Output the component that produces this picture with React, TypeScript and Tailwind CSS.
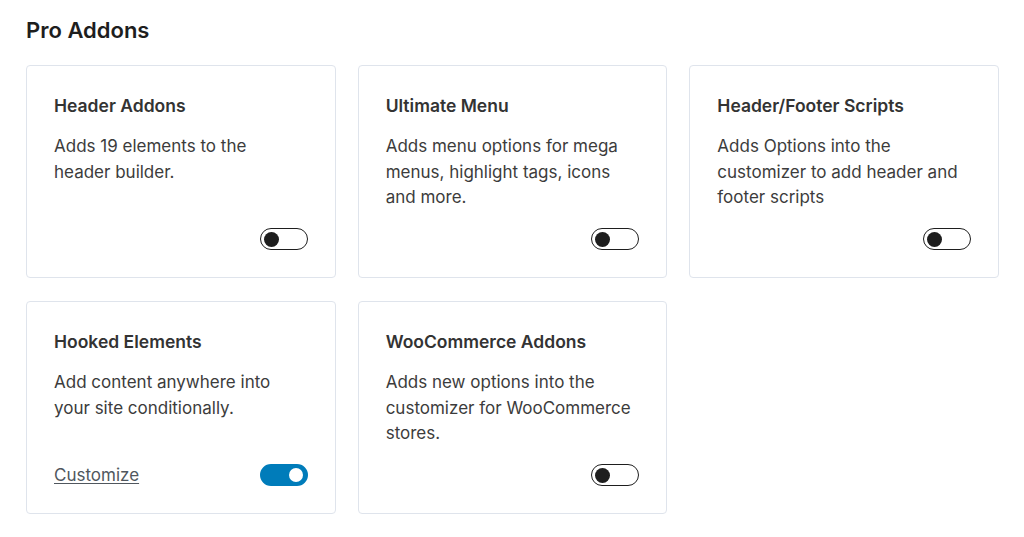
import { useState } from 'react'

type Addon = {
  key: string
  title: string
  description: string
  enabled: boolean
  customize?: boolean
}

const ADDONS: Addon[] = [
  { key: 'header', title: 'Header Addons', description: 'Adds 19 elements to the header builder.', enabled: false },
  { key: 'menu', title: 'Ultimate Menu', description: 'Adds menu options for mega menus, highlight tags, icons and more.', enabled: false },
  { key: 'scripts', title: 'Header/Footer Scripts', description: 'Adds Options into the customizer to add header and footer scripts', enabled: false },
  { key: 'hooks', title: 'Hooked Elements', description: 'Add content anywhere into your site conditionally.', enabled: true, customize: true },
  { key: 'woo', title: 'WooCommerce Addons', description: 'Adds new options into the customizer for WooCommerce stores.', enabled: false },
]

export default function App() {
  return (
    <div
      className="min-h-screen bg-white px-[26px] pt-[16px] text-[#1e1e1e]"
      style={{ fontFamily: 'Inter, "Noto Sans", sans-serif' }}
    >
      <h2 className="text-[22px] font-semibold leading-[28px] text-[#1e1e1e]">Pro Addons</h2>

      <div className="mt-[21px] grid w-[973px] grid-cols-3 gap-x-[22px] gap-y-[23px]">
        {ADDONS.map((addon) => (
          <AddonCard key={addon.key} addon={addon} />
        ))}
      </div>
    </div>
  )
}

function AddonCard({ addon }: { addon: Addon }) {
  const [enabled, setEnabled] = useState(addon.enabled)

  return (
    <div className="flex h-[213px] flex-col rounded-[4px] border border-[#dfe4ec] bg-white pt-[28px] pr-[27px] pb-[27px] pl-[27px]">
      <h3 className="text-[17.5px] font-semibold leading-[24px] text-[#333]">{addon.title}</h3>
      {/* keep the text a bit narrower than the card so the lines break as in the design */}
      <p className="mt-[16px] pr-[4px] text-[17px] leading-[25.5px] text-[#3c3c3c]">{addon.description}</p>

      <div className="mt-auto flex items-center justify-between">
        {addon.customize ? (
          <a href="#" className="text-[17px] leading-[22px] text-[#50575e] underline underline-offset-2">
            Customize
          </a>
        ) : (
          <span />
        )}
        <button
          type="button"
          onClick={() => setEnabled((v) => !v)}
          className={
            enabled
              ? 'relative flex h-[22px] w-[48px] items-center rounded-full border-2 border-[#007cba] bg-[#007cba]'
              : 'relative flex h-[22px] w-[48px] items-center rounded-full border-[1.5px] border-[#1e1e1e] bg-white'
          }
        >
          <span
            className={
              enabled
                ? 'absolute right-[3px] h-[14px] w-[14px] rounded-full bg-white'
                : 'absolute left-[3px] h-[15px] w-[15px] rounded-full bg-[#1e1e1e]'
            }
          />
        </button>
      </div>
    </div>
  )
}
